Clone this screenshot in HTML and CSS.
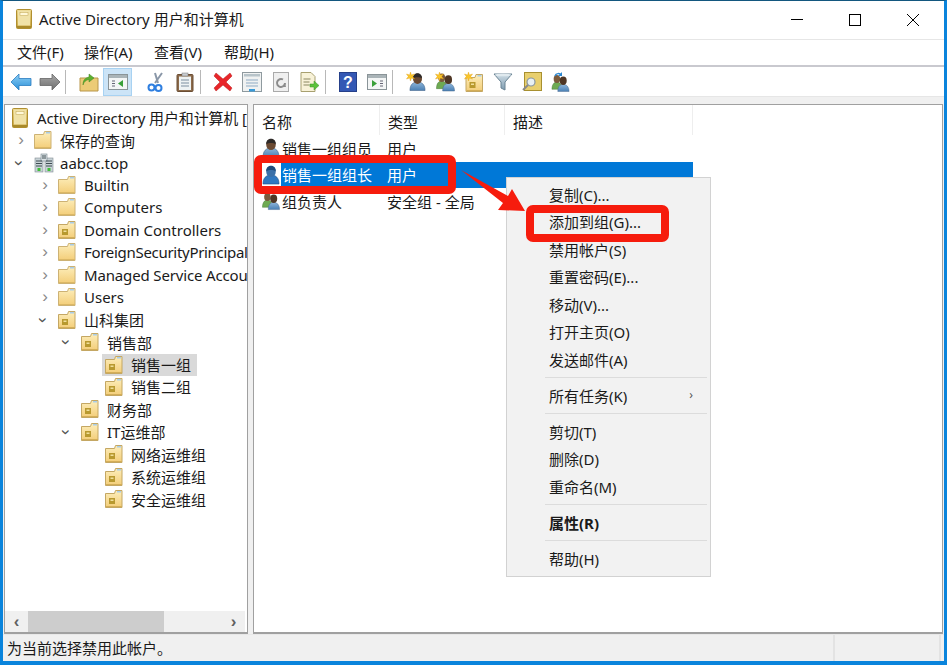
FILE: index.html
```html
<!DOCTYPE html>
<html lang="zh-CN">
<head>
  <meta charset="UTF-8">
  <title>Active Directory 用户和计算机</title>
  <link rel="stylesheet" href="styles.css">
</head>
<body>
  <!-- Icon sprites -->
  <svg class="sprites" aria-hidden="true">
    <defs>
      <linearGradient id="gold" x1="0" y1="0" x2="0" y2="1">
        <stop offset="0" stop-color="#fdeebb"/>
        <stop offset="1" stop-color="#f3cd78"/>
      </linearGradient>
      <linearGradient id="bookGold" x1="0" y1="0" x2="0" y2="1">
        <stop offset="0" stop-color="#ead68a"/>
        <stop offset="1" stop-color="#c9a53e"/>
      </linearGradient>
      <linearGradient id="blueArrow" x1="0" y1="0" x2="0" y2="1">
        <stop offset="0" stop-color="#8fd0f5"/>
        <stop offset="1" stop-color="#2a8fd8"/>
      </linearGradient>
      <linearGradient id="greyArrow" x1="0" y1="0" x2="0" y2="1">
        <stop offset="0" stop-color="#a8a8a8"/>
        <stop offset="1" stop-color="#6f6f6f"/>
      </linearGradient>
      <linearGradient id="shirt" x1="0" y1="0" x2="0" y2="1">
        <stop offset="0" stop-color="#8fb6da"/>
        <stop offset="1" stop-color="#4a80b4"/>
      </linearGradient>
      <linearGradient id="steel" x1="0" y1="0" x2="0" y2="1">
        <stop offset="0" stop-color="#cfdde6"/>
        <stop offset="1" stop-color="#7f9cb0"/>
      </linearGradient>
    </defs>
    <symbol id="i-book" viewBox="0 0 16 20">
      <rect x="0.500" y="0.500" width="15" height="19" rx="1" fill="url(#bookGold)" stroke="#b08f30"/>
      <rect x="2" y="1.500" width="12" height="15" fill="#f0e2a8"/>
      <rect x="4" y="3.500" width="8" height="3" fill="#fff8d8" stroke="#bfa550" stroke-width="0.500"/>
      <rect x="1" y="17" width="14" height="2" fill="#a98a2a"/>
    </symbol>
    <symbol id="i-folder" viewBox="0 0 18 18">
      <path d="M0.500 3.500h9l1-3h6.500v17h-16.500z" fill="url(#gold)" stroke="#cdb274"/>
      <rect x="12" y="1" width="4" height="1.500" fill="#a8cce8"/>
      <rect x="1" y="16" width="16" height="1" fill="#dcb866"/>
    </symbol>
    <symbol id="i-ou" viewBox="0 0 18 18">
      <path d="M0.500 3.500h9l1-3h6.500v17h-16.500z" fill="url(#gold)" stroke="#c4a763"/>
      <rect x="12" y="1" width="4" height="1.500" fill="#a8cce8"/>
      <rect x="1" y="16" width="16" height="1" fill="#d4ae58"/>
      <rect x="4" y="8" width="6" height="6" fill="#b8992f"/>
      <rect x="5.500" y="9.500" width="3" height="1.500" fill="#f0e09c"/>
    </symbol>
    <symbol id="i-domain" viewBox="0 0 20 20">
      <rect x="1" y="5" width="8" height="14" fill="#c8d2d6" stroke="#808d93" stroke-width="0.600"/>
      <rect x="11" y="5" width="8" height="14" fill="#c8d2d6" stroke="#808d93" stroke-width="0.600"/>
      <rect x="7" y="1" width="6" height="7" fill="#dbe2e5" stroke="#76848a" stroke-width="0.600"/>
      <path d="M2 8h6M2 10.500h6M2 13h6M12 8h6M12 10.500h6M12 13h6M8 3h4M8 5h4" stroke="#3f4c52" stroke-width="1.100"/>
      <rect x="3.500" y="15" width="3" height="3" fill="#3fbf3a"/>
      <rect x="13.500" y="15" width="3" height="3" fill="#3fbf3a"/>
    </symbol>
    <symbol id="i-user" viewBox="0 0 18 20">
      <path d="M1 19c0-6 3-9 8-9s8 3 8 9z" fill="url(#shirt)" stroke="#41648a" stroke-width="0.600"/>
      <ellipse cx="9" cy="6.500" rx="4.800" ry="5.500" fill="#6b4a32"/>
      <path d="M4.200 6c0-7 9.600-7 9.600 0-2.500-1.500-7-1.500-9.600 0z" fill="#2e2a28"/>
    </symbol>
    <symbol id="i-user-sel" viewBox="0 0 18 20">
      <rect width="18" height="20" fill="#fff"/>
      <path d="M1 19c0-6 3-9 8-9s8 3 8 9z" fill="#2f78c0" stroke="#1b4f88" stroke-width="0.600"/>
      <ellipse cx="9" cy="6.500" rx="4.800" ry="5.500" fill="#3a70a8"/>
      <path d="M4.200 6c0-7 9.600-7 9.600 0-2.500-1.500-7-1.500-9.600 0z" fill="#1f4a78"/>
    </symbol>
    <symbol id="i-group" viewBox="0 0 20 20">
      <path d="M0.500 17c0-5 2-8 5.500-8s5.500 3 5.500 8z" fill="#6eaa52" stroke="#47783a" stroke-width="0.500"/>
      <ellipse cx="6" cy="5.500" rx="3.600" ry="4.400" fill="#7b5a3c"/>
      <path d="M7 19.500c0-5.500 2.500-8 6-8s6.500 2.500 6.500 8z" fill="url(#shirt)" stroke="#47688c" stroke-width="0.500"/>
      <ellipse cx="13" cy="7.500" rx="3.900" ry="4.600" fill="#4f3624"/>
    </symbol>
    <symbol id="i-star" viewBox="0 0 10 10">
      <path d="M5 0l1 3.200 3.500-1-2 2.800 2 2.800-3.500-1-1 3.200-1-3.200-3.500 1 2-2.800-2-2.800 3.500 1z" fill="#f9c52a" stroke="#e09c12" stroke-width="0.400"/>
    </symbol>
  </svg>

  <div class="window">
    <!-- Title bar -->
    <div class="titlebar">
      <svg class="title-icon"><use href="#i-book"/></svg>
      <span class="title-text">Active Directory 用户和计算机</span>
      <div class="win-controls">
        <div class="win-btn"><svg width="14" height="14" viewBox="0 0 14 14"><path d="M1 6.500h12" stroke="#000"/></svg></div>
        <div class="win-btn"><svg width="14" height="14" viewBox="0 0 14 14"><rect x="1.500" y="1.500" width="11" height="11" fill="none" stroke="#000"/></svg></div>
        <div class="win-btn"><svg width="14" height="14" viewBox="0 0 14 14"><path d="M1 1l12 12M13 1l-12 12" stroke="#000"/></svg></div>
      </div>
    </div>

    <!-- Menu bar -->
    <div class="menubar">
      <span class="menu-item first">文件(F)</span>
      <span class="menu-item">操作(A)</span>
      <span class="menu-item">查看(V)</span>
      <span class="menu-item">帮助(H)</span>
    </div>

    <!-- Toolbar -->
    <div class="toolbar">
      <div class="tool"><svg width="22" height="18" viewBox="0 0 22 18"><path d="M1 9l8-8v4.500h12v7h-12v4.500z" fill="url(#blueArrow)" stroke="#2a7cc0" stroke-width="0.800"/></svg></div>
      <div class="tool"><svg width="22" height="18" viewBox="0 0 22 18"><path d="M21 9l-8-8v4.500h-12v7h12v4.500z" fill="url(#greyArrow)" stroke="#666" stroke-width="0.800"/></svg></div>
      <div class="tool-sep wide"></div>
      <div class="tool"><svg width="20" height="20" viewBox="0 0 20 20"><path d="M1 6h18v13h-18z" fill="#eccb76" stroke="#b8964a"/><path d="M4 13c0-5 2-7 6-8v-3l5 4-5 4v-2.500c-3 .5-5 2-6 5.500z" fill="#5cb030" stroke="#3e8420" stroke-width="0.500"/></svg></div>
      <div class="tool active"><svg width="20" height="18" viewBox="0 0 20 18"><rect x="0.500" y="1.500" width="19" height="15" fill="#f4f6f6" stroke="#8a9498"/><rect x="1" y="2" width="18" height="3" fill="#aab4b8"/><path d="M4 8h3M4 10.500h3M4 13h3" stroke="#667"/><path d="M15 7v7l-5-3.500z" fill="#3aa03a"/></svg></div>
      <div class="tool-sep blank"></div>
      <div class="tool"><svg width="18" height="20" viewBox="0 0 18 20"><path d="M15 1l-7 10M8 1l3 10" stroke="#8a97a8" stroke-width="2"/><circle cx="4.500" cy="15.500" r="3" fill="none" stroke="#2f7fe0" stroke-width="2"/><circle cx="11.500" cy="16" r="3" fill="none" stroke="#2f7fe0" stroke-width="2"/></svg></div>
      <div class="tool"><svg width="18" height="20" viewBox="0 0 18 20"><rect x="1" y="2.500" width="16" height="17" rx="1" fill="#8c6a4a" stroke="#6b4e34"/><rect x="3" y="4.500" width="12" height="13.500" fill="#eef3f4"/><path d="M5 8h8M5 11h8M5 14h8" stroke="#7d8fa0"/><rect x="6" y="1" width="6" height="3" fill="#c8ccd0" stroke="#777" stroke-width="0.500"/></svg></div>
      <div class="tool-sep"></div>
      <div class="tool"><svg width="20" height="20" viewBox="0 0 20 20"><path d="M3 1l7 6 7-6 2 3-6 6 6 6-2 3-7-6-7 6-2-3 6-6-6-6z" fill="#e8262a" stroke="#b81c1c" stroke-width="0.500"/></svg></div>
      <div class="tool"><svg width="20" height="20" viewBox="0 0 20 20"><rect x="0.500" y="0.500" width="19" height="19" fill="#f0f2f2" stroke="#8f9a9f"/><rect x="2" y="2" width="16" height="2.500" fill="#b8c4ca"/><path d="M4 8h12M4 11h12M4 14h12" stroke="#8fabc4"/><rect x="7" y="17" width="6" height="2.500" fill="#3a9ad8"/></svg></div>
      <div class="tool"><svg width="16" height="20" viewBox="0 0 16 20"><rect x="0.500" y="0.500" width="15" height="19" fill="#efefef" stroke="#aaa"/><path d="M12 11a4 4 0 1 1-2-3.500" fill="none" stroke="#8c8c8c" stroke-width="2"/><path d="M12 11l1 4h-4z" fill="#8c8c8c"/></svg></div>
      <div class="tool"><svg width="20" height="20" viewBox="0 0 20 20"><path d="M1 .5h10l4 4v15h-14z" fill="#f8f2d8" stroke="#a8a070"/><path d="M3.500 7h7M3.500 10h6M3.500 13h6" stroke="#8a8660"/><path d="M10 12h4v-3l5 4.500-5 4.500v-3h-4z" fill="#5cc23c" stroke="#3e9426" stroke-width="0.500"/></svg></div>
      <div class="tool-sep"></div>
      <div class="tool"><svg width="18" height="20" viewBox="0 0 18 20"><rect x="0.500" y="0.500" width="17" height="19" fill="#3458b4" stroke="#26408a"/><text x="9" y="15.500" class="help-mark">?</text></svg></div>
      <div class="tool"><svg width="20" height="18" viewBox="0 0 20 18"><rect x="0.500" y="1.500" width="19" height="15" fill="#f4f6f6" stroke="#8a9498"/><rect x="1" y="2" width="18" height="3" fill="#aab4b8"/><path d="M5 7v7l5-3.500z" fill="#3aa03a"/><path d="M13 8h3M13 10.500h3M13 13h3" stroke="#667"/></svg></div>
      <div class="tool-sep wide"></div>
      <div class="tool"><svg width="20" height="20"><use href="#i-user" x="3" width="17" height="20"/><use href="#i-star" width="9" height="9"/></svg></div>
      <div class="tool"><svg width="20" height="20"><use href="#i-group" x="1" width="19" height="20"/><use href="#i-star" width="9" height="9"/></svg></div>
      <div class="tool"><svg width="20" height="20"><use href="#i-ou" x="1" y="2" width="19" height="18"/><use href="#i-star" width="9" height="9"/></svg></div>
      <div class="tool"><svg width="20" height="20" viewBox="0 0 20 20"><path d="M1 2h18l-7 8v8l-4-2v-6z" fill="url(#steel)" stroke="#6a8494"/><ellipse cx="10" cy="3" rx="8" ry="1.300" fill="#e0eaef"/></svg></div>
      <div class="tool"><svg width="20" height="20" viewBox="0 0 20 20"><rect x="2.500" y="0.500" width="17" height="18" fill="#e8cf6e" stroke="#a89030"/><circle cx="9" cy="10" r="4" fill="#e8f0f4" stroke="#8896a0" stroke-width="1.200"/><path d="M6 13l-5 5" stroke="#8a8a8a" stroke-width="2"/></svg></div>
      <div class="tool"><svg width="20" height="20" viewBox="0 0 20 20"><use href="#i-group" y="2" width="19" height="18"/><path d="M4 4c1-3 5-3 6-1" fill="none" stroke="#2a86d0" stroke-width="1.500"/><path d="M11 0v4h-4z" fill="#2a86d0"/></svg></div>
    </div>

    <!-- Tree and list -->
    <div class="panes">
      <div class="tree-pane">
        <div class="tree">
          <div class="tree-row root"><svg class="tree-icon book"><use href="#i-book"/></svg><span class="tight">Active Directory 用户和计算机 [</span></div>
          <div class="tree-row lv0"><span class="chev">›</span><svg class="tree-icon"><use href="#i-folder"/></svg><span>保存的查询</span></div>
          <div class="tree-row lv0"><span class="chev open">›</span><svg class="tree-icon domain"><use href="#i-domain"/></svg><span>aabcc.top</span></div>
          <div class="tree-row lv1"><span class="chev">›</span><svg class="tree-icon"><use href="#i-folder"/></svg><span>Builtin</span></div>
          <div class="tree-row lv1"><span class="chev">›</span><svg class="tree-icon"><use href="#i-folder"/></svg><span>Computers</span></div>
          <div class="tree-row lv1"><span class="chev">›</span><svg class="tree-icon"><use href="#i-ou"/></svg><span>Domain Controllers</span></div>
          <div class="tree-row lv1"><span class="chev">›</span><svg class="tree-icon"><use href="#i-folder"/></svg><span class="tighter">ForeignSecurityPrincipal</span></div>
          <div class="tree-row lv1"><span class="chev">›</span><svg class="tree-icon"><use href="#i-folder"/></svg><span class="tight">Managed Service Accou</span></div>
          <div class="tree-row lv1"><span class="chev">›</span><svg class="tree-icon"><use href="#i-folder"/></svg><span>Users</span></div>
          <div class="tree-row lv1"><span class="chev open">›</span><svg class="tree-icon"><use href="#i-ou"/></svg><span>山科集团</span></div>
          <div class="tree-row lv2"><span class="chev open">›</span><svg class="tree-icon"><use href="#i-ou"/></svg><span>销售部</span></div>
          <div class="tree-row lv3"><div class="tree-sel"><svg class="tree-icon"><use href="#i-ou"/></svg><span>销售一组</span></div></div>
          <div class="tree-row lv3"><div class="tree-item"><svg class="tree-icon"><use href="#i-ou"/></svg><span>销售二组</span></div></div>
          <div class="tree-row lv2"><span class="chev none"></span><svg class="tree-icon"><use href="#i-ou"/></svg><span>财务部</span></div>
          <div class="tree-row lv2"><span class="chev open">›</span><svg class="tree-icon"><use href="#i-ou"/></svg><span>IT运维部</span></div>
          <div class="tree-row lv3"><div class="tree-item"><svg class="tree-icon"><use href="#i-ou"/></svg><span>网络运维组</span></div></div>
          <div class="tree-row lv3"><div class="tree-item"><svg class="tree-icon"><use href="#i-ou"/></svg><span>系统运维组</span></div></div>
          <div class="tree-row lv3"><div class="tree-item"><svg class="tree-icon"><use href="#i-ou"/></svg><span>安全运维组</span></div></div>
        </div>
        <div class="hscroll">
          <span class="scroll-arrow">‹</span>
          <div class="scroll-track"><div class="scroll-thumb"></div></div>
          <span class="scroll-arrow">›</span>
        </div>
      </div>

      <div class="list-pane">
        <div class="list-head">
          <div class="col col-name">名称</div>
          <div class="col col-type">类型</div>
          <div class="col col-desc">描述</div>
        </div>
        <div class="list-row">
          <svg class="list-icon"><use href="#i-user"/></svg>
          <div class="cell-name">销售一组组员</div>
          <div class="cell-type">用户</div>
        </div>
        <div class="list-row selected">
          <svg class="list-icon"><use href="#i-user-sel"/></svg>
          <div class="cell-name">销售一组组长</div>
          <div class="cell-type">用户</div>
        </div>
        <div class="list-row">
          <svg class="list-icon"><use href="#i-group"/></svg>
          <div class="cell-name">组负责人</div>
          <div class="cell-type">安全组 - 全局</div>
        </div>
      </div>
    </div>

    <!-- Status bar -->
    <div class="statusbar">
      <div class="status-main">为当前选择禁用此帐户。</div>
      <div class="status-cell"></div>
    </div>
  </div>

  <!-- Context menu -->
  <div class="context-menu">
    <div class="cm-item">复制(C)...</div>
    <div class="cm-item">添加到组(G)...</div>
    <div class="cm-item">禁用帐户(S)</div>
    <div class="cm-item">重置密码(E)...</div>
    <div class="cm-item">移动(V)...</div>
    <div class="cm-item">打开主页(O)</div>
    <div class="cm-item">发送邮件(A)</div>
    <div class="cm-sep"></div>
    <div class="cm-item">所有任务(K)<span class="cm-more">›</span></div>
    <div class="cm-sep"></div>
    <div class="cm-item">剪切(T)</div>
    <div class="cm-item">删除(D)</div>
    <div class="cm-item">重命名(M)</div>
    <div class="cm-sep"></div>
    <div class="cm-item bold">属性(R)</div>
    <div class="cm-sep"></div>
    <div class="cm-item">帮助(H)</div>
  </div>

  <!-- Red annotations over the screenshot -->
  <div class="mark mark-row"></div>
  <div class="mark mark-menu"></div>
  <svg class="mark-arrow" width="70" height="45" viewBox="0 0 70 45">
    <path d="M1 1L48 27l4-7 13 22-27-1 5-7z" fill="#f61c0d"/>
  </svg>
</body>
</html>
```

FILE: styles.css
```css
* {
  box-sizing: border-box;
}
html, body {
  margin: 0;
  width: 947px;
  height: 665px;
  overflow: hidden;
}
body {
  position: relative;
  font-family: "Noto Sans", "Noto Sans CJK SC", sans-serif;
  font-size: 15px;
  color: #1a1a1a;
  background: #0078d7;
}
.sprites {
  position: absolute;
  width: 0;
  height: 0;
}

/* Window frame */
.window {
  width: 947px;
  height: 665px;
  display: flex;
  flex-direction: column;
  border-top: 1px solid #13577f;
  border-left: 3px solid #0a84dc;
  border-right: 3px solid #0a84dc;
  border-bottom: 4px solid #0a84dc;
  background: #f0f0f0;
}

/* Title bar */
.titlebar {
  height: 39px;
  display: flex;
  align-items: center;
  padding-left: 13px;
  padding-bottom: 3px;
  background: #fff;
  border-bottom: 1px solid #e6e6e6;
}
.title-icon {
  width: 16px;
  height: 20px;
  margin-right: 7px;
}
.win-controls {
  display: flex;
  margin-left: auto;
  margin-right: 2px;
  margin-top: 3px;
}
.win-btn {
  width: 58px;
  height: 38px;
  display: flex;
  align-items: center;
  justify-content: center;
}

/* Menu bar */
.menubar {
  height: 27px;
  display: flex;
  align-items: center;
  padding-left: 14px;
  padding-bottom: 2px;
  background: #fff;
  border-bottom: 2px solid #c9c9cf;
}
.menu-item {
  width: 70px;
}
.menu-item.first {
  width: 67px;
}

/* Toolbar */
.toolbar {
  height: 30px;
  display: flex;
  align-items: center;
  padding-left: 3px;
  padding-top: 1px;
  background: #fff;
  border-bottom: 1px solid #e6e6e6;
}
.tool {
  width: 29px;
  height: 28px;
  display: flex;
  align-items: center;
  justify-content: center;
}
.tool.active {
  background: #cce4f7;
  border: 1px solid #a8d2f2;
}
.tool-sep {
  width: 9px;
  height: 24px;
}
.tool-sep::before {
  content: '';
  display: block;
  width: 1px;
  height: 24px;
  margin-left: 1px;
  background: #b8b8b8;
}
.tool-sep.wide {
  width: 10px;
}
.tool-sep.blank::before {
  display: none;
}
.help-mark {
  font-family: "Liberation Sans", sans-serif;
  font-size: 16px;
  font-weight: bold;
  fill: #fff;
  text-anchor: middle;
}

/* Panes */
.panes {
  flex: 1;
  min-height: 0;
  display: flex;
  gap: 5px;
  padding: 7px 0 0 1px;
}
.tree-pane {
  width: 244px;
  display: flex;
  flex-direction: column;
  background: #fff;
  border: 1px solid #a0a0a0;
  border-bottom-width: 2px;
}
.tree {
  flex: 1;
  overflow: hidden;
  padding-top: 1.5px;
}
.tree-row {
  height: 22.45px;
  display: flex;
  align-items: center;
  white-space: nowrap;
}
.tree-icon {
  width: 18px;
  height: 18px;
  flex: none;
  margin-right: 8px;
}
.tree-icon.book {
  width: 16px;
  height: 20px;
  margin-right: 9px;
}
.tree-icon.domain {
  width: 20px;
  height: 20px;
  margin-right: 6px;
}
.tight {
  letter-spacing: -0.15px;
}
.tighter {
  letter-spacing: -0.3px;
}
.root {
  padding-left: 7px;
}
.lv0 {
  padding-left: 8px;
}
.lv1 {
  padding-left: 32px;
}
.lv2 {
  padding-left: 55px;
}
.lv3 {
  padding-left: 97px;
}
.chev {
  width: 21px;
  flex: none;
  color: #8a8a8a;
  font-family: "Liberation Sans", sans-serif;
  font-size: 17px;
  line-height: 18px;
  text-align: center;
  padding-right: 5px;
}
.chev.open {
  transform: rotate(90deg) translateY(5px);
  padding-right: 0;
  color: #555;
}
.tree-sel, .tree-item {
  height: 22px;
  display: flex;
  align-items: center;
  padding: 0 6px 0 3px;
}
.tree-sel {
  background: #d9d9d9;
}

/* Tree scrollbar */
.hscroll {
  height: 21px;
  display: flex;
  align-items: center;
  background: #f0f0f0;
  margin-right: 2px;
}
.scroll-arrow {
  width: 23px;
  flex: none;
  text-align: center;
  font-family: "Liberation Sans", sans-serif;
  font-size: 17px;
  font-weight: bold;
  color: #606060;
}
.scroll-track {
  flex: 1;
  height: 100%;
}
.scroll-thumb {
  width: 136px;
  height: 100%;
  background: #cdcdcd;
}

/* List */
.list-pane {
  width: 690px;
  background: #fff;
  border: 1px solid #a0a0a0;
  border-bottom-width: 2px;
}
.list-head {
  height: 30px;
  display: flex;
  width: 439px;
  border-right: 1px solid #eeeeee;
}
.col {
  display: flex;
  align-items: center;
  padding-left: 8px;
  padding-top: 2px;
  border-right: 1px solid #eeeeee;
}
.col-name {
  width: 126px;
}
.col-type {
  width: 125px;
}
.col-desc {
  width: 187px;
  border-right: 0;
}
.list-row {
  width: 439px;
  height: 26.5px;
  display: flex;
  align-items: center;
}
.list-icon {
  width: 18px;
  height: 20px;
  flex: none;
  margin: 0 1px 0 8px;
}
.cell-name {
  width: 106px;
  flex: none;
  height: 100%;
  display: flex;
  align-items: center;
  padding-left: 1px;
}
.cell-type {
  flex: 1;
  height: 100%;
  display: flex;
  align-items: center;
}
.selected {
  color: #fff;
}
.selected .cell-name, .selected .cell-type {
  background: #0078d7;
}

/* Status bar */
.statusbar {
  height: 27px;
  display: flex;
  padding-left: 4px;
  align-items: center;
  border-top: 1px solid #e8e8e8;
}
.status-main {
  width: 828px;
  height: 100%;
  display: flex;
  align-items: center;
  padding-bottom: 2px;
  border-right: 2px solid #e3e3e3;
}
.status-cell {
  width: 106px;
  height: 100%;
  border-right: 2px solid #e3e3e3;
}

/* Context menu */
.context-menu {
  position: absolute;
  left: 506px;
  top: 177px;
  width: 205px;
  height: 400px;
  padding: 3.5px 3px;
  background: #f2f2f2;
  border: 1px solid #d2d2d2;
}
.cm-item {
  position: relative;
  height: 27.5px;
  line-height: 27.5px;
  padding-left: 39px;
  white-space: nowrap;
}
.cm-item.bold {
  font-weight: bold;
}
.cm-more {
  position: absolute;
  right: 14px;
  top: -2px;
  font-size: 12px;
  color: #555;
}
.cm-sep {
  height: 8.5px;
  margin-left: 35px;
  padding-top: 2.5px;
}
.cm-sep::before {
  content: '';
  display: block;
  height: 1px;
  background: #dcdcdc;
}

/* Annotations */
.mark {
  position: absolute;
  border: 8px solid #f61c0d;
  border-radius: 7px;
}
.mark-row {
  left: 254px;
  top: 155px;
  width: 202px;
  height: 39px;
}
.mark-menu {
  left: 526px;
  top: 205px;
  width: 143px;
  height: 37px;
}
.mark-arrow {
  position: absolute;
  left: 460px;
  top: 169px;
}
```
